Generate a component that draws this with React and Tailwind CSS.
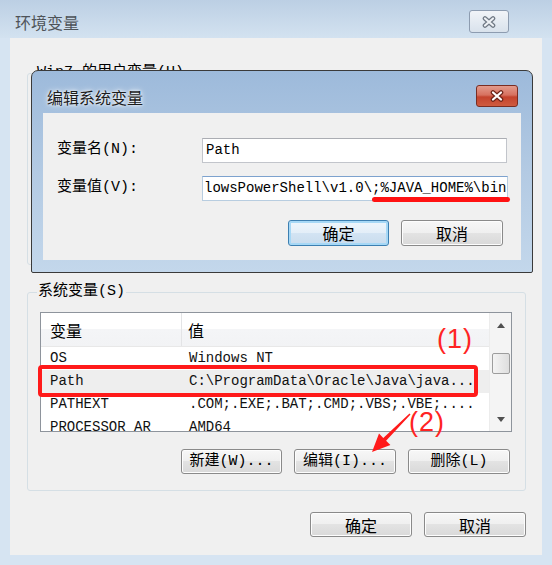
const mono = "font-['Liberation_Mono','Noto_Sans_CJK_SC',monospace]";
const cjk = "font-['Noto_Sans_CJK_SC','Noto_Sans',sans-serif]";

function CloseX({ outline, fill }) {
  return (
    <svg width="16" height="12" viewBox="0 0 16 12">
      <path d="M4 2.5 L12 9.5 M12 2.5 L4 9.5" stroke={outline} strokeWidth="4.6" strokeLinecap="round" fill="none" />
      <path d="M4 2.5 L12 9.5 M12 2.5 L4 9.5" stroke={fill} strokeWidth="2.2" strokeLinecap="round" fill="none" />
    </svg>
  );
}

function Btn({ children, className = '', isDefault = false }) {
  return (
    <button
      className={
        'h-[25px] rounded-[3px] border flex items-center justify-center text-[15px] leading-none text-black ' +
        (isDefault
          ? 'border-[#3c7fb1] bg-[linear-gradient(to_bottom,#eef6fc_0%,#e3eef8_50%,#d3e4f3_50%,#c9dcee_100%)] shadow-[inset_0_0_0_2px_#a6d8f6] '
          : 'border-[#8a8a8a] bg-[linear-gradient(to_bottom,#f7f7f7_0%,#efefef_50%,#e3e3e3_50%,#d9d9d9_100%)] shadow-[inset_0_0_0_1px_#fdfdfd] ') +
        className
      }
    >
      {children}
    </button>
  );
}

const rows = [
  ['OS', 'Windows NT', false],
  ['Path', 'C:\\ProgramData\\Oracle\\Java\\java...', true],
  ['PATHEXT', '.COM;.EXE;.BAT;.CMD;.VBS;.VBE;....', false],
  ['PROCESSOR_AR', 'AMD64', false],
];

export default function App() {
  return (
    <div className="relative w-[552px] h-[565px] overflow-hidden flex flex-col bg-[#d6e4f2]">
      {/* outer title bar */}
      <div className="h-[38px] shrink-0 flex items-start justify-between bg-gradient-to-b from-[#bccfe4] to-[#d3e2f0] pl-[15px] pr-[43px]">
        <span className={cjk + ' pt-[12px] text-[16px] leading-[20px] text-[#4e5358]'}>环境变量</span>
        <div className="mt-[10px] w-[40px] h-[23px] rounded-[3px] border border-[#8d9cb0] bg-gradient-to-b from-[#f1f4f8] to-[#d9e2ec] flex items-center justify-center">
          <CloseX outline="#6f7884" fill="#eef1f5" />
        </div>
      </div>

      {/* outer content */}
      <div className="mx-[10px] mb-[10px] flex-1 bg-[#f0f0f0] flex flex-col">
        <fieldset className="mt-[27px] ml-[17px] mr-[16px] h-[200px] shrink-0 border border-[#d5dfe5] rounded-[3px]">
          <legend className={mono + ' ml-[8px] px-[1px] text-[15px] leading-[16px] text-black'}>Win7 的用户变量(U)</legend>
        </fieldset>

        <fieldset className="mt-[19px] ml-[17px] mr-[16px] shrink-0 border border-[#d5dfe5] rounded-[3px] pb-[16px]">
          <legend className={mono + ' ml-[9px] px-[1px] text-[15px] leading-[16px] text-black'}>系统变量(S)</legend>

          {/* list view */}
          <div className="mt-[12px] ml-[12px] w-[472px] h-[120px] border border-[#8e949c] bg-white flex overflow-hidden">
            <div className="flex-1 flex flex-col">
              <div className="h-[34px] shrink-0 flex bg-[linear-gradient(to_bottom,#ffffff_0%,#ffffff_50%,#f4f5f7_50%,#f2f3f5_100%)] border-b border-[#e8e8e8]">
                <div className={cjk + ' w-[141px] pl-[9px] flex items-center text-[16px] text-black border-r border-[#e3e4e6]'}>变量</div>
                <div className={cjk + ' flex-1 pl-[6px] flex items-center text-[16px] text-black'}>值</div>
              </div>
              {rows.map(([name, value, sel]) => (
                <div
                  key={name}
                  className={
                    mono +
                    ' h-[23px] shrink-0 flex items-center text-[14px] text-[#111] whitespace-nowrap ' +
                    (sel ? 'bg-[#eeeeee]' : '')
                  }
                >
                  <span className="w-[141px] pl-[9px] overflow-hidden">{name}</span>
                  <span className="pl-[7px]">{value}</span>
                </div>
              ))}
            </div>
            {/* scrollbar */}
            <div className="w-[22px] bg-[#f4f4f4] border-l border-[#ececec] flex flex-col items-center">
              <div className="h-[24px] shrink-0 flex items-center justify-center">
                <svg width="8" height="5" viewBox="0 0 8 5">
                  <path d="M0 5 L4 0 L8 5 Z" fill="#505050" />
                </svg>
              </div>
              <div className="mt-[16px] w-[18px] h-[21px] shrink-0 rounded-[2px] border border-[#9d9d9d] bg-gradient-to-r from-[#f4f4f4] to-[#dedede]" />
              <div className="flex-1" />
              <div className="h-[24px] shrink-0 flex items-center justify-center">
                <svg width="8" height="5" viewBox="0 0 8 5">
                  <path d="M0 0 L8 0 L4 5 Z" fill="#505050" />
                </svg>
              </div>
            </div>
          </div>

          <div className="mt-[17px] pr-[15px] flex justify-end gap-[12px]">
            <Btn className={mono + ' w-[101px]'}>新建(W)...</Btn>
            <Btn className={mono + ' w-[102px]'}>编辑(I)...</Btn>
            <Btn className={mono + ' w-[102px]'}>删除(L)</Btn>
          </div>
        </fieldset>

        <div className="mt-[21px] pr-[16px] flex justify-end gap-[12px]">
          <Btn className={cjk + ' w-[102px] text-[16px]'}>确定</Btn>
          <Btn className={cjk + ' w-[102px] text-[16px]'}>取消</Btn>
        </div>
      </div>

      {/* edit dialog on top */}
      <div className="absolute left-[31px] top-[70px] w-[502px] h-[203px] border border-[#3a3a3a] rounded-t-[7px] rounded-b-[2px] bg-gradient-to-b from-[#9dbadb] via-[#b3cae3] to-[#c3d7eb] flex flex-col">
        <div className="h-[42px] shrink-0 flex items-start justify-between pl-[15px] pr-[14px]">
          <span className={cjk + ' pt-[16px] text-[16px] leading-[20px] text-[#1c1c1c] [text-shadow:0_0_6px_#ffffff,0_0_3px_#ffffff]'}>编辑系统变量</span>
          <div className="mt-[14px] w-[42px] h-[22px] rounded-[3px] border border-[#7a2d22] bg-[linear-gradient(to_bottom,#e39b8c_0%,#d7715f_45%,#c4432d_55%,#cf5b3f_100%)] flex items-center justify-center">
            <CloseX outline="#6e2418" fill="#ffffff" />
          </div>
        </div>
        <div className="mx-[11px] h-[147px] shrink-0 bg-[#f0f0f0] flex flex-col">
          <div className="mt-[25px] flex items-center">
            <span className={mono + ' w-[159px] pl-[14px] text-[15px] text-black'}>变量名(N):</span>
            <div className="w-[305px] h-[25px] bg-white border border-[#c2c5cb] border-t-[#abadb3] flex items-center pl-[3px]">
              <span className={mono + ' text-[14px] text-black'}>Path</span>
            </div>
          </div>
          <div className="mt-[13px] flex items-center">
            <span className={mono + ' w-[159px] pl-[14px] text-[15px] text-black'}>变量值(V):</span>
            <div className="w-[306px] h-[25px] bg-white border border-[#b8cde0] border-t-[#7da2ce] flex items-center pl-[1px] overflow-hidden">
              <span className={mono + ' text-[14px] text-black whitespace-nowrap'}>{'lowsPowerShell\\v1.0\\;%JAVA_HOME%\\bin'}</span>
            </div>
          </div>
          <div className="mt-[19px] pr-[18px] flex justify-end gap-[12px]">
            <Btn isDefault className={cjk + ' w-[101px] h-[26px] text-[16px]'}>确定</Btn>
            <Btn className={cjk + ' w-[102px] h-[26px] text-[16px]'}>取消</Btn>
          </div>
        </div>
      </div>

      {/* annotations */}
      <div className="absolute left-[372px] top-[197px] w-[138px] h-[5px] rounded-full bg-[#ff1212]" />
      <div className="absolute left-[38px] top-[365px] w-[440px] h-[32px] border-[4px] border-[#ff1a1a] rounded-[4px]" />
      <span className="absolute left-[437px] top-[326px] font-['Liberation_Sans',sans-serif] text-[27px] leading-none tracking-[1px] text-[#ff2323]">(1)</span>
      <span className="absolute left-[409px] top-[409px] font-['Liberation_Sans',sans-serif] text-[27px] leading-none tracking-[1px] text-[#ff2323]">(2)</span>
      <svg className="absolute left-0 top-0 pointer-events-none" width="552" height="565" viewBox="0 0 552 565">
        <polygon points="372,452 379,433.6 383.3,437.9 409.5,413.5 410.5,414.5 386.1,440.7 390.4,445" fill="#ff1a1a" />
      </svg>
    </div>
  );
}
